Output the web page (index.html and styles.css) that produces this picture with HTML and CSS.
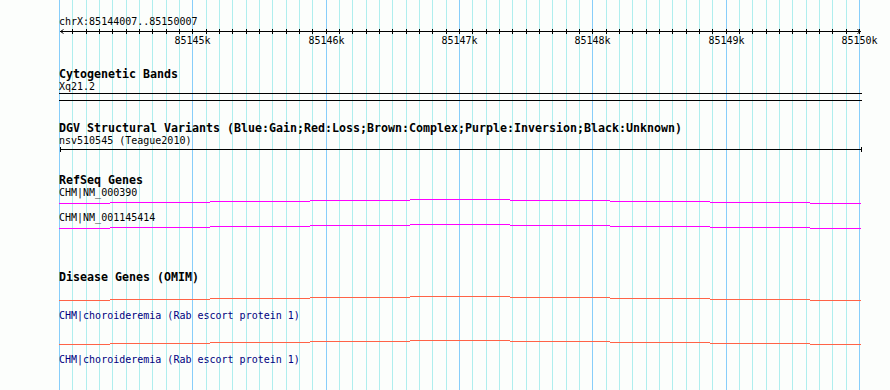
FILE: index.html
```html
<!DOCTYPE html>
<html lang="en">

<head>
  <title>chrX:85144007..85150007</title>
  <meta charset="UTF-8">
  <link rel="stylesheet" href="styles.css">
</head>

<body>
  <!-- grid behind the tracks: 100bp minor lines, 1kb major lines -->
  <svg class="grid" width="890" height="390">
    <path class="minor" d="M72.5 0V390M86.5 0V390M99.5 0V390M112.5 0V390M126.5 0V390M139.5 0V390M152.5 0V390M166.5 0V390M179.5 0V390M206.5 0V390M219.5 0V390M232.5 0V390M246.5 0V390M259.5 0V390M272.5 0V390M286.5 0V390M299.5 0V390M312.5 0V390M339.5 0V390M352.5 0V390M366.5 0V390M379.5 0V390M392.5 0V390M406.5 0V390M419.5 0V390M432.5 0V390M446.5 0V390M472.5 0V390M486.5 0V390M499.5 0V390M512.5 0V390M526.5 0V390M539.5 0V390M552.5 0V390M566.5 0V390M579.5 0V390M606.5 0V390M619.5 0V390M632.5 0V390M646.5 0V390M659.5 0V390M672.5 0V390M686.5 0V390M699.5 0V390M712.5 0V390M739.5 0V390M752.5 0V390M766.5 0V390M779.5 0V390M792.5 0V390M806.5 0V390M819.5 0V390M832.5 0V390M846.5 0V390" />
    <path class="major" d="M59.5 0V390M192.5 0V390M326.5 0V390M459.5 0V390M592.5 0V390M726.5 0V390M859.5 0V390" />
  </svg>

  <div class="browser">
    <div class="ruler">
      <div class="ruler-title">chrX:85144007..85150007</div>
      <div class="scale">
        <svg class="axis" width="803" height="8">
          <path d="M1 3.5H802M4.5 1.5L1.5 3.5L4.5 5.5M798.5 1.5L801.5 3.5L798.5 5.5" />
          <path d="M13.5 1V6M27.5 1V6M40.5 1V6M53.5 1V6M67.5 1V6M80.5 1V6M93.5 1V6M107.5 1V6M120.5 1V6M133.5 1V6M147.5 1V6M160.5 1V6M173.5 1V6M187.5 1V6M200.5 1V6M213.5 1V6M227.5 1V6M240.5 1V6M253.5 1V6M267.5 1V6M280.5 1V6M293.5 1V6M307.5 1V6M320.5 1V6M333.5 1V6M347.5 1V6M360.5 1V6M373.5 1V6M387.5 1V6M400.5 1V6M413.5 1V6M427.5 1V6M440.5 1V6M453.5 1V6M467.5 1V6M480.5 1V6M493.5 1V6M507.5 1V6M520.5 1V6M533.5 1V6M547.5 1V6M560.5 1V6M573.5 1V6M587.5 1V6M600.5 1V6M613.5 1V6M627.5 1V6M640.5 1V6M653.5 1V6M667.5 1V6M680.5 1V6M693.5 1V6M707.5 1V6M720.5 1V6M733.5 1V6M747.5 1V6M760.5 1V6M773.5 1V6M787.5 1V6M800.5 1V6" />
        </svg>
        <span class="tick-label" style="left: 133.5px;">85145k</span>
        <span class="tick-label" style="left: 267.5px;">85146k</span>
        <span class="tick-label" style="left: 400.5px;">85147k</span>
        <span class="tick-label" style="left: 533.5px;">85148k</span>
        <span class="tick-label" style="left: 667.5px;">85149k</span>
        <span class="tick-label" style="left: 800.5px;">85150k</span>
      </div>
    </div>

    <div class="track cytoband">
      <h2 class="track-title">Cytogenetic Bands</h2>
      <div class="feature-label">Xq21.2</div>
      <div class="band"></div>
    </div>

    <div class="track dgv">
      <h2 class="track-title">DGV Structural Variants (Blue:Gain;Red:Loss;Brown:Complex;Purple:Inversion;Black:Unknown)</h2>
      <div class="feature-label">nsv510545 (Teague2010)</div>
      <div class="sv"></div>
    </div>

    <div class="track refseq">
      <h2 class="track-title">RefSeq Genes</h2>
      <div class="feature-label">CHM|NM_000390</div>
      <svg class="gene" width="803" height="13">
        <path d="M0 4.5H51M51 3.5H151M151 2.5H251M251 1.5H351M351 0.5H451M451 1.5H551M551 2.5H651M651 3.5H751M751 4.5H802" />
      </svg>
      <div class="feature-label">CHM|NM_001145414</div>
      <svg class="gene" width="803" height="13">
        <path d="M0 4.5H51M51 3.5H151M151 2.5H251M251 1.5H351M351 0.5H451M451 1.5H551M551 2.5H651M651 3.5H751M751 4.5H802" />
      </svg>
    </div>

    <div class="track omim">
      <h2 class="track-title">Disease Genes (OMIM)</h2>
      <svg class="gene" width="803" height="14">
        <path d="M0 4.5H51M51 3.5H151M151 2.5H251M251 1.5H351M351 0.5H451M451 1.5H551M551 2.5H651M651 3.5H751M751 4.5H802" />
      </svg>
      <div class="feature-label">CHM|choroideremia (Rab escort protein 1)</div>
      <svg class="gene" width="803" height="14">
        <path d="M0 4.5H51M51 3.5H151M151 2.5H251M251 1.5H351M351 0.5H451M451 1.5H551M551 2.5H651M651 3.5H751M751 4.5H802" />
      </svg>
      <div class="feature-label">CHM|choroideremia (Rab escort protein 1)</div>
    </div>
  </div>
</body>

</html>
```

FILE: styles.css
```css
* {
  margin: 0;
  padding: 0;
  box-sizing: border-box;
}

body {
  width: 890px;
  height: 390px;
  overflow: hidden;
  position: relative;
  background-color: #fcfefc;
  font-family: 'DejaVu Sans Mono', monospace;
  font-size: 10px;
  color: #000;
}

.grid {
  position: absolute;
  left: 0;
  top: 0;
  z-index: 0;
}

.grid .minor {
  stroke: #afeeee;
}

.grid .major {
  stroke: #87cefa;
}

.browser {
  position: relative;
  z-index: 1;
  padding: 15px 0 0 59px;
}

.ruler-title {
  line-height: 13px;
}

.scale {
  position: relative;
  height: 20px;
}

.axis {
  display: block;
  fill: none;
  stroke: #000;
}

.tick-label {
  position: absolute;
  top: 6px;
  line-height: 13px;
  transform: translateX(-50%);
}

.track-title {
  font-size: 11.63px;
  font-weight: bold;
  line-height: 13px;
}

.feature-label {
  line-height: 12px;
  white-space: nowrap;
}

.cytoband {
  margin-top: 20px;
}

.band {
  width: 803px;
  height: 8px;
  border-top: 1px solid #000;
  border-bottom: 1px solid #000;
}

.dgv {
  margin-top: 21px;
}

.sv {
  margin-left: 1px;
  width: 802px;
  height: 5px;
  border-left: 1px solid #000;
  border-right: 1px solid #000;
  background: linear-gradient(#000, #000) 0 2px / 100% 1px no-repeat;
}

.gene {
  display: block;
  fill: none;
}

.refseq {
  margin-top: 22px;
}

.refseq .gene {
  stroke: #ff00ff;
}

.omim {
  margin-top: 34px;
}

.omim .track-title {
  margin-bottom: 12px;
}

.omim .gene {
  stroke: #ff6347;
}

.omim .feature-label {
  color: #000080;
  margin-bottom: 18px;
}
```
